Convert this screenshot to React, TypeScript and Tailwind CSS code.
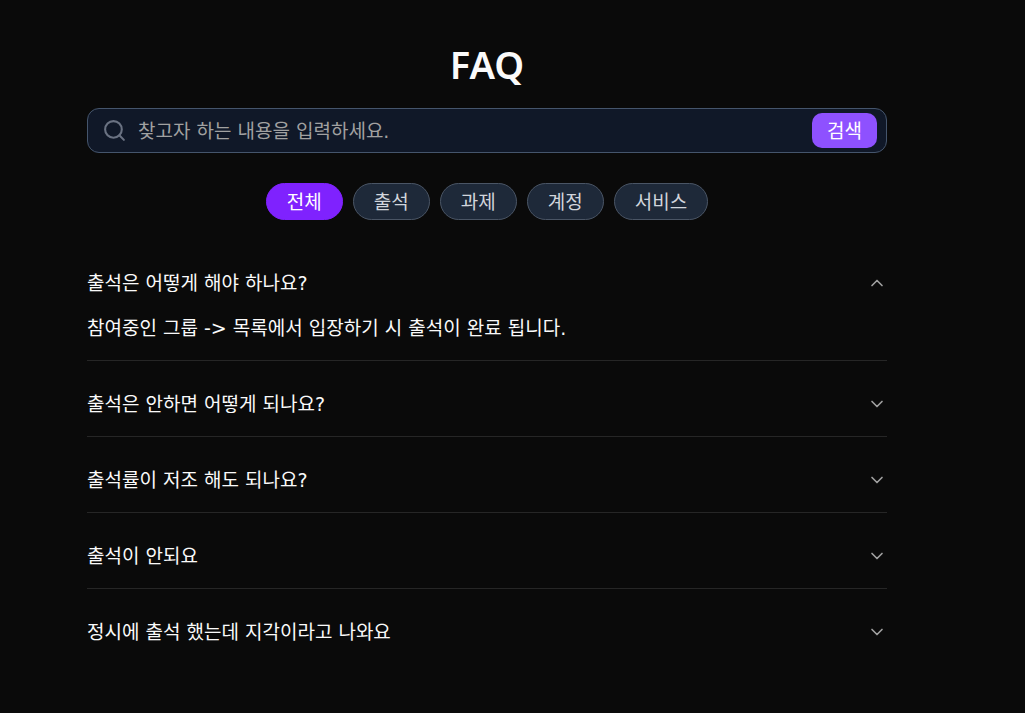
import { useState } from "react";
import { ChevronDown, ChevronUp, Search } from "lucide-react";

const categories = ["전체", "출석", "과제", "계정", "서비스"];

const faqs = [
  {
    question: "출석은 어떻게 해야 하나요?",
    answer: "참여중인 그룹 -> 목록에서 입장하기 시 출석이 완료 됩니다.",
  },
  {
    question: "출석은 안하면 어떻게 되나요?",
    answer: "출석하지 않으면 결석으로 처리됩니다.",
  },
  {
    question: "출석률이 저조 해도 되나요?",
    answer: "그룹의 출석 기준을 확인해 주세요.",
  },
  {
    question: "출석이 안되요",
    answer: "새로고침 후 다시 시도해 주세요.",
  },
  {
    question: "정시에 출석 했는데 지각이라고 나와요",
    answer: "그룹 관리자에게 문의해 주세요.",
  },
];

function SearchBar() {
  return (
    <form
      role="search"
      onSubmit={(e) => e.preventDefault()}
      className="mt-5 flex h-[45px] items-center rounded-xl border border-[#45556c] bg-[#101828] pr-[9px] pl-[14px]"
    >
      <Search size={25} className="shrink-0 text-[#6a7282]" aria-hidden="true" />
      <input
        type="search"
        aria-label="FAQ 검색"
        placeholder="찾고자 하는 내용을 입력하세요."
        className="ml-[11px] min-w-0 flex-1 bg-transparent text-white outline-none placeholder:text-[#a1a1a1]"
      />
      <button
        type="submit"
        className="h-[35px] shrink-0 rounded-[10px] bg-[#8e51ff] px-[15px] text-white"
      >
        검색
      </button>
    </form>
  );
}

function CategoryTabs() {
  const [active, setActive] = useState("전체");
  return (
    <div className="mt-[30px] flex flex-wrap justify-center gap-[10px]">
      {categories.map((name) => (
        <button
          key={name}
          type="button"
          aria-pressed={active === name}
          onClick={() => setActive(name)}
          className={
            active === name
              ? "h-[37px] rounded-full border border-[#7f22fe] bg-[#7f22fe] px-5 text-white"
              : "h-[37px] rounded-full border border-[#4a5565] bg-[#1e2939] px-5 text-[#d1d5dc]"
          }
        >
          {name}
        </button>
      ))}
    </div>
  );
}

function FaqList() {
  const [open, setOpen] = useState(0);
  return (
    <ul className="mt-5">
      {faqs.map((faq, i) => {
        const Icon = open === i ? ChevronUp : ChevronDown;
        return (
          <li
            key={faq.question}
            className="border-b border-[#262626] pt-[29px] pb-[18px] last:border-b-0"
          >
            <button
              type="button"
              aria-expanded={open === i}
              onClick={() => setOpen(open === i ? -1 : i)}
              className="flex w-full items-center justify-between text-left"
            >
              <span>{faq.question}</span>
              <Icon size={20} className="shrink-0 text-[#a1a1a1]" aria-hidden="true" />
            </button>
            {open === i && <p className="mt-[17px]">{faq.answer}</p>}
          </li>
        );
      })}
    </ul>
  );
}

export default function App() {
  return (
    <div className="min-h-screen bg-[#0a0a0a] pr-[51px] font-['DejaVu_Sans','Noto_Sans_CJK_KR',sans-serif] text-[19px] leading-[28px] text-[#fafafa]">
      <main className="mx-auto max-w-[800px] pt-10">
        <h1 className="text-center font-['Noto_Sans',sans-serif] text-[38px] leading-[48px] font-semibold">
          FAQ
        </h1>
        <SearchBar />
        <CategoryTabs />
        <FaqList />
      </main>
    </div>
  );
}
